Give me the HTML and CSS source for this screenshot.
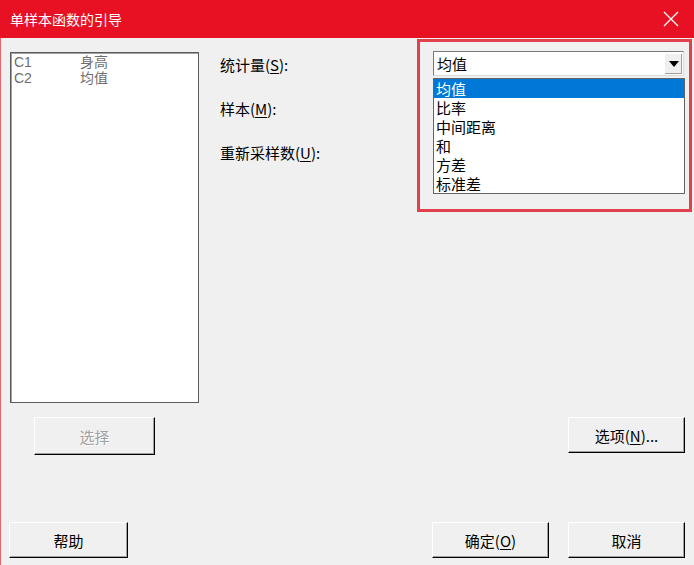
FILE: index.html
```html
<!DOCTYPE html>
<html lang="zh-CN">
<head>
    <meta charset="UTF-8">
    <title>单样本函数的引导</title>
    <link rel="stylesheet" href="styles.css">
</head>
<body>
    <div class="dialog">
        <div class="titlebar">
            <span class="title">单样本函数的引导</span>
            <svg class="close" width="16" height="16" viewBox="0 0 16 16">
                <path d="M1 1 L15 15 M15 1 L1 15" stroke="#fff" stroke-width="1.3" fill="none"/>
            </svg>
        </div>

        <div class="main">
            <div class="listbox">
                <div class="var"><span class="col">C1</span><span class="name">身高</span></div>
                <div class="var"><span class="col">C2</span><span class="name">均值</span></div>
            </div>

            <div class="form">
                <label class="lbl">统计量(<u>S</u>):</label>
                <div class="combo">
                    <span class="combo-text">均值</span>
                    <span class="combo-btn">
                        <svg width="10" height="6" viewBox="0 0 10 6"><path d="M0 0 H10 L5 6 Z" fill="#000"/></svg>
                    </span>
                    <ul class="droplist">
                        <li class="sel">均值</li>
                        <li>比率</li>
                        <li>中间距离</li>
                        <li>和</li>
                        <li>方差</li>
                        <li>标准差</li>
                    </ul>
                </div>
                <label class="lbl">样本(<u>M</u>):</label>
                <div></div>
                <label class="lbl">重新采样数(<u>U</u>):</label>
                <div></div>
            </div>
        </div>

        <div class="mid-row">
            <button class="btn btn-select" disabled>选择</button>
            <button class="btn btn-options">选项(<u>N</u>)...</button>
        </div>

        <div class="footer">
            <button class="btn btn-help">帮助</button>
            <button class="btn btn-ok">确定(<u>O</u>)</button>
            <button class="btn btn-cancel">取消</button>
        </div>

        <!-- 标注框 -->
        <div class="mark"></div>
    </div>
</body>
</html>
```

FILE: styles.css
```css
body {
    margin: 0;
    font-family: "Noto Sans CJK SC", "Liberation Sans", sans-serif;
    font-size: 15px;
    color: #000;
}

.dialog {
    position: relative;
    width: 694px;
    height: 565px;
    box-sizing: border-box;
    border-left: 1px solid #e8646e;
    background: #f0f0f0;
    display: flex;
    flex-direction: column;
}

/* Title bar */
.titlebar {
    height: 38px;
    margin-left: -1px;
    background: #e81123;
    display: flex;
    align-items: center;
    justify-content: space-between;
    padding: 0 15px 0 10px;
    flex-shrink: 0;
}
.title {
    color: #fff;
    font-size: 14px;
    line-height: 20px;
}

/* Top area */
.main {
    display: flex;
    padding: 14px 0 0 9px;
}
.listbox {
    width: 189px;
    height: 351px;
    box-sizing: border-box;
    background: #fff;
    border: 1px solid #5c5c5c;
    box-shadow: inset 1px 1px 0 #a0a0a0;
    padding: 1px 0 0 3px;
    color: #6d6d6d;
    font-family: "Liberation Sans", "Noto Sans CJK SC", sans-serif;
    font-size: 14px;
}
.var {
    display: flex;
    line-height: 16px;
}
.col {
    width: 66px;
}

.form {
    margin-left: 21px;
    margin-top: -1px;
    display: grid;
    grid-template-columns: 213px 252px;
    grid-template-rows: 25px 25px 25px;
    row-gap: 19px;
    align-content: start;
}
.lbl {
    line-height: 25px;
    padding-top: 1px;
}
.lbl u, .btn u {
    text-underline-offset: 2px;
}

/* Combo box */
.combo {
    position: relative;
    width: 251px;
    height: 25px;
    box-sizing: border-box;
    background: #fff;
    border: 1px solid #7a7a7a;
    border-right-color: #dcdcdc;
    border-bottom-color: #dcdcdc;
    display: flex;
    align-items: center;
    justify-content: space-between;
}
.combo-text {
    padding-left: 3px;
    line-height: 20px;
}
.combo-btn {
    width: 18px;
    height: 21px;
    margin-right: 1px;
    background: #f0f0f0;
    border-left: 1px solid #fff;
    border-top: 1px solid #fff;
    box-shadow: inset -1px -1px 0 #a0a0a0;
    display: flex;
    align-items: center;
    justify-content: center;
    box-sizing: border-box;
}
.droplist {
    position: absolute;
    left: -1px;
    top: 26px;
    width: 252px;
    margin: 0;
    padding: 0;
    list-style: none;
    background: #fff;
    border: 1px solid #646464;
    box-sizing: border-box;
    z-index: 5;
}
.droplist li {
    height: 19px;
    line-height: 19px;
    padding-left: 2px;
}
.droplist li.sel {
    background: #0078d7;
    color: #fff;
}

/* Buttons */
.btn {
    font-family: inherit;
    font-size: 15px;
    height: 36px;
    background: #f0f0f0;
    border: 1px solid;
    border-color: #fff #000 #000 #fff;
    box-shadow: inset -1px -1px 0 #a0a0a0;
    padding: 0;
    color: #000;
}
.btn-select {
    width: 121px;
    height: 38px;
    color: #a0a0a0;
    text-shadow: 1px 1px 0 #fff;
}
.btn-options {
    width: 117px;
}

.mid-row {
    display: flex;
    justify-content: space-between;
    padding: 14px 9px 0 33px;
}

.footer {
    margin-top: auto;
    display: flex;
    padding: 0 9px 7px 8px;
}
.btn-help {
    width: 119px;
}
.btn-ok {
    width: 117px;
    margin-left: auto;
}
.btn-cancel {
    width: 117px;
    margin-left: 19px;
}

/* Red annotation frame */
.mark {
    position: absolute;
    left: 416px;
    top: 39px;
    width: 275px;
    height: 173px;
    box-sizing: border-box;
    border: 3px solid #e0414a;
    pointer-events: none;
}
```
